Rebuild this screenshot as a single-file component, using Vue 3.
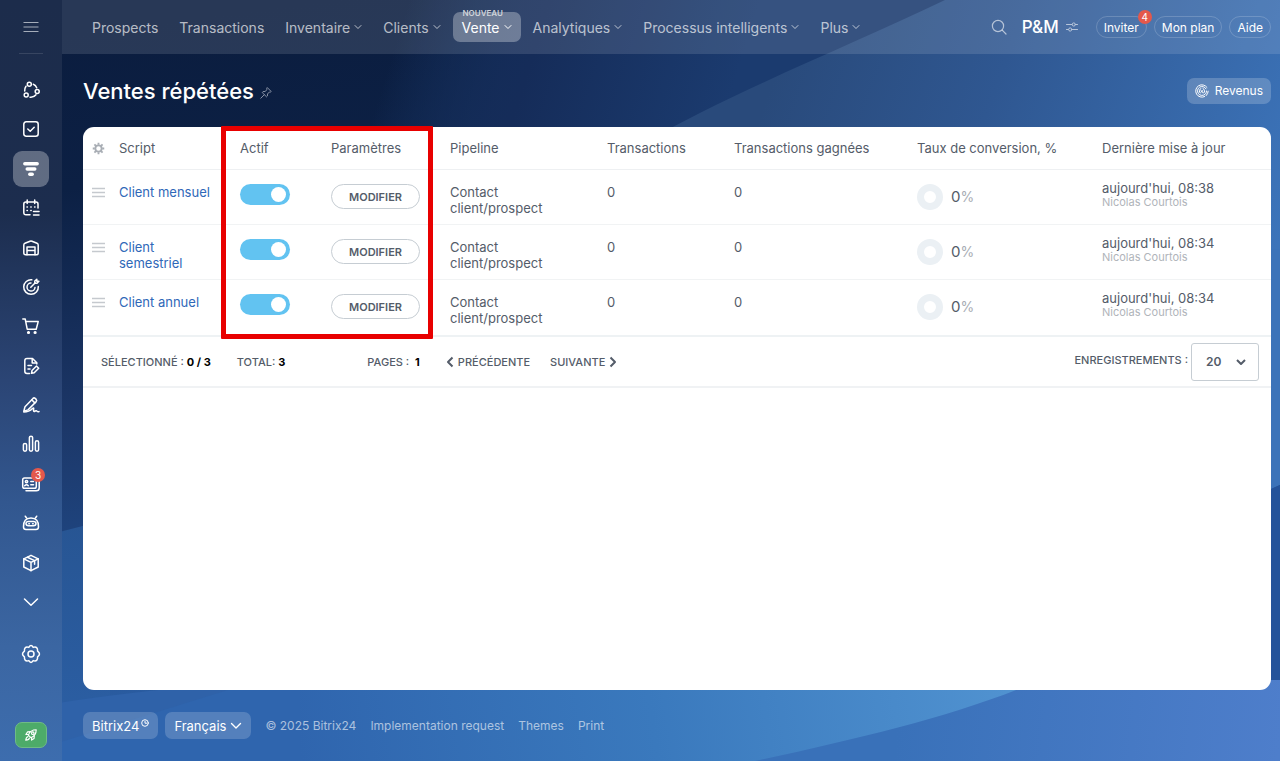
<template>
    <div class="layout">
        <svg class="wallpaper" viewBox="0 0 1280 761" preserveAspectRatio="none" aria-hidden="true">
            <defs>
                <linearGradient id="base" gradientUnits="userSpaceOnUse" x1="330" y1="0" x2="430" y2="761">
                    <stop offset="0" stop-color="#0b1d3f" />
                    <stop offset="0.2" stop-color="#0c2044" />
                    <stop offset="0.5" stop-color="#1c3768" />
                    <stop offset="0.7" stop-color="#1f4885" />
                    <stop offset="0.9" stop-color="#2c60a6" />
                    <stop offset="1" stop-color="#2f65ae" />
                </linearGradient>
                <linearGradient id="middle" gradientUnits="userSpaceOnUse" x1="400" y1="30" x2="720" y2="130">
                    <stop offset="0" stop-color="#1b3b6f" stop-opacity="0" />
                    <stop offset="0.4" stop-color="#152c59" />
                    <stop offset="1" stop-color="#1b3b6f" />
                </linearGradient>
                <linearGradient id="beam" gradientUnits="userSpaceOnUse" x1="780" y1="60" x2="1280" y2="240">
                    <stop offset="0" stop-color="#294a7b" />
                    <stop offset="0.4" stop-color="#2f5791" />
                    <stop offset="1" stop-color="#3c74ba" />
                </linearGradient>
                <linearGradient id="side" gradientUnits="userSpaceOnUse" x1="0" y1="520" x2="0" y2="761">
                    <stop offset="0" stop-color="#275593" />
                    <stop offset="1" stop-color="#2c60a6" />
                </linearGradient>
                <linearGradient id="bottom" gradientUnits="userSpaceOnUse" x1="300" y1="761" x2="1000" y2="650">
                    <stop offset="0" stop-color="#3a79bd" stop-opacity="0" />
                    <stop offset="0.5" stop-color="#3a79bd" />
                    <stop offset="1" stop-color="#5092d0" />
                </linearGradient>
                <linearGradient id="corner" gradientUnits="userSpaceOnUse" x1="900" y1="700" x2="1280" y2="740">
                    <stop offset="0" stop-color="#3971b9" />
                    <stop offset="1" stop-color="#4e7ecb" />
                </linearGradient>
            </defs>
            <rect width="1280" height="761" fill="url(#base)" />
            <rect x="300" width="980" height="200" fill="url(#middle)" />
            <path d="M945 0C850 46 740 88 640 145V250H1280V0Z" fill="url(#beam)" />
            <path d="M1000 249H1280V485L1000 610Z" fill="#3b73b9" />
            <path d="M1000 610L1280 485V761H1000Z" fill="#24539a" />
            <path d="M0 550Q60 530 110 520V761H0Z" fill="url(#side)" />
            <path d="M0 715Q60 698 260 680V761H0Z" fill="#2f62a9" />
            <path d="M260 680H1100V761H0Z" fill="#2f65ae" />
            <path d="M300 680H1100V761H300Z" fill="url(#bottom)" />
            <path d="M755 761C860 738 960 715 1040 680H1280V761Z" fill="url(#corner)" />
        </svg>

        <aside class="sidebar">
            <button class="burger" aria-label="Menu">
                <svg viewBox="0 0 20 20"><path d="M2.5 5.5h15M2.5 10h15M2.5 14.5h15" /></svg>
            </button>
            <nav class="menu">
                <a v-for="item in sideItems" :key="item.name" href="#" class="side-item"
                    :class="item.name === 'crm' ? 'active' : ''" :aria-label="item.name">
                    <svg viewBox="0 0 20 20" :class="item.name">
                        <path v-for="(d, i) in item.paths" :key="i" :d="d" />
                    </svg>
                    <span v-if="item.badge" class="badge">{{ item.badge }}</span>
                </a>
            </nav>
            <a href="#" class="side-item settings" aria-label="settings">
                <svg viewBox="0 0 20 20">
                    <circle cx="10" cy="10" r="3" />
                    <path d="M7.8 3.4Q10 -.2 12.2 3.4Q16.9 2 16.6 7.2Q20.4 10 16.6 12.8Q16.9 18 12.2 16.6Q10 20.2 7.8 16.6Q3.1 18 3.4 12.8Q-.4 10 3.4 7.2Q3.1 2 7.8 3.4Z" />
                </svg>
            </a>
            <button class="rocket" aria-label="Start">
                <svg viewBox="0 0 20 20">
                    <path d="M7 10.2C8.6 6.2 11.5 4.2 15.8 4.2C15.8 8.5 13.8 11.4 9.8 13ZM7.3 9.2L4.3 9.4L6.2 6.6L9.2 6.3M10.8 12.7L10.6 15.7L13.4 13.8L13.7 10.8M6.6 11.8C5.2 12 4.5 13.2 4.2 15.8C6.8 15.5 8 14.8 8.2 13.4" />
                    <circle cx="12" cy="8" r="1.4" />
                </svg>
            </button>
        </aside>

        <div class="page">
            <header class="topbar">
                <nav class="tabs">
                    <a v-for="tab in tabs" :key="tab.label" href="#" class="tab" :class="tab.hint ? 'active' : ''">
                        <span v-if="tab.hint" class="hint">{{ tab.hint }}</span>
                        {{ tab.label }}
                        <svg v-if="tab.more" class="caret" viewBox="0 0 8 8"><path d="M1 2.5L4 5.5L7 2.5" /></svg>
                    </a>
                </nav>
                <div class="tools">
                    <button class="icon-btn" aria-label="Rechercher">
                        <svg viewBox="0 0 16 16"><circle cx="7" cy="7" r="5.6" /><path d="M11.2 11.2L15 15" /></svg>
                    </button>
                    <a href="#" class="company">P&amp;M
                        <svg viewBox="0 0 12 12">
                            <path d="M.5 3.5H6M9.6 3.5H11.5M.5 8.5H2.4M6 8.5H11.5" />
                            <circle cx="7.8" cy="3.5" r="1.6" /><circle cx="4.2" cy="8.5" r="1.6" />
                        </svg>
                    </a>
                    <div class="pills">
                        <button class="pill">Inviter<span class="badge">4</span></button>
                        <button class="pill">Mon plan</button>
                        <button class="pill">Aide</button>
                    </div>
                </div>
            </header>

            <main class="content">
                <div class="heading">
                    <h1>Ventes répétées</h1>
                    <button class="pin" aria-label="Épingler">
                        <svg viewBox="0 0 12 12"><path d="M7.5.8L11.2 4.5L10.2 5.2L9.4 5L7.5 7L7.4 9L6.5 9.8L2.2 5.5L3 4.6L5 4.5L7 2.6L6.8 1.6ZM4.3 7.7L.8 11.2" /></svg>
                    </button>
                    <button class="revenue">
                        <svg viewBox="0 0 14 14">
                            <path d="M12 3.4A6.2 6.2 0 1 0 9.6 12.6M11 4.8A4.5 4.5 0 1 0 10 10.4M13.2 7.2Q13.2 9.5 11.2 11.6M11.5 7Q11.5 8.4 10.8 9.6M5.2 9A2.7 2.7 0 0 1 6 4.4M8 4.5A2.7 2.7 0 0 1 8.4 9.2L6 6.4M6 8.2L8 6.4" />
                        </svg>
                        Revenus
                    </button>
                </div>

                <section class="card">
                    <table class="grid">
                        <colgroup>
                            <col class="c-drag"><col class="c-script"><col class="c-active"><col class="c-params">
                            <col class="c-pipe"><col class="c-deals"><col class="c-won"><col class="c-rate"><col class="c-date">
                        </colgroup>
                        <thead>
                            <tr>
                                <th class="drag">
                                    <button class="gear" aria-label="Configurer">
                                        <svg viewBox="0 0 14 14">
                                            <path d="M7 .8V3M7 11V13.2M.8 7H3M11 7H13.2M2.6 2.6L4.2 4.2M9.8 9.8L11.4 11.4M11.4 2.6L9.8 4.2M4.2 9.8L2.6 11.4" />
                                            <circle cx="7" cy="7" r="3.4" />
                                        </svg>
                                    </button>
                                </th>
                                <th v-for="name in columns" :key="name">{{ name }}</th>
                            </tr>
                        </thead>
                        <tbody>
                            <tr v-for="row in rows" :key="row.name">
                                <td class="drag">
                                    <svg class="handle" viewBox="0 0 13 11"><path d="M0 1.5h13M0 5.5h13M0 9.5h13" /></svg>
                                </td>
                                <td class="script"><a href="#">{{ row.name }}</a></td>
                                <td><input v-model="row.active" type="checkbox" class="toggle" :aria-label="'Actif ' + row.name"></td>
                                <td><button class="edit">Modifier</button></td>
                                <td>Contact client/prospect</td>
                                <td>{{ row.deals }}</td>
                                <td>{{ row.won }}</td>
                                <td>
                                    <div class="rate">
                                        <span class="donut"></span>
                                        <span>{{ row.rate }}<small>%</small></span>
                                    </div>
                                </td>
                                <td class="date">{{ row.date }}<span class="author">Nicolas Courtois</span></td>
                            </tr>
                        </tbody>
                    </table>
                    <div class="mark"></div>

                    <div class="pager">
                        <span class="selected">Sélectionné : <b>0 / 3</b></span>
                        <span class="total">Total: <b>3</b></span>
                        <span class="pages">Pages : <b>1</b></span>
                        <a href="#" class="prev">
                            <svg viewBox="0 0 8 12"><path d="M6.5 1.5L2 6L6.5 10.5" /></svg>Précédente
                        </a>
                        <a href="#" class="next">
                            Suivante<svg viewBox="0 0 8 12"><path d="M1.5 1.5L6 6L1.5 10.5" /></svg>
                        </a>
                        <label for="page-size">Enregistrements :</label>
                        <div class="select">
                            <select id="page-size" v-model="pageSize">
                                <option>5</option>
                                <option>10</option>
                                <option>20</option>
                                <option>50</option>
                            </select>
                            <svg viewBox="0 0 12 8"><path d="M2 2L6 6L10 2" /></svg>
                        </div>
                    </div>
                </section>
            </main>

            <footer class="footer">
                <button class="chip brand">Bitrix24
                    <svg viewBox="0 0 8 8"><circle cx="4" cy="4" r="3.3" /><path d="M4 2.2V4.2H5.6" /></svg>
                </button>
                <button class="chip">Français
                    <svg class="down" viewBox="0 0 12 8"><path d="M1.5 1.5L6 6L10.5 1.5" /></svg>
                </button>
                <span class="copy">© 2025 Bitrix24</span>
                <a href="#">Implementation request</a>
                <a href="#">Themes</a>
                <a href="#">Print</a>
            </footer>
        </div>
    </div>
</template>
<script setup>
import { ref } from 'vue'

const pageSize = ref('20')

const sideItems = [
    { name: 'collab', paths: ['M10.3 4.2a2 2 0 1 1-4 0a2 2 0 1 1 4 0Z', 'M18.2 11.6a2 2 0 1 1-4 0a2 2 0 1 1 4 0Z', 'M7.2 14.9a2 2 0 1 1-4 0a2 2 0 1 1 4 0Z', 'M3.7 11Q3.5 8.2 5 6.2', 'M12.3 4.3Q14.8 5.2 15.7 7.7', 'M9 17.2Q12.8 17.6 15 14.8'] },
    { name: 'tasks', paths: ['M5.3 2.8H14.7Q17.2 2.8 17.2 5.3V14.7Q17.2 17.2 14.7 17.2H5.3Q2.8 17.2 2.8 14.7V5.3Q2.8 2.8 5.3 2.8Z', 'M6.8 10L9.2 12.2L13.2 8.2'] },
    { name: 'crm', paths: ['M3.8 4.7H16.2', 'M6.2 10H13.8', 'M8.8 15.3H11.2'] },
    { name: 'calendar', paths: ['M9 16.8H5Q2.8 16.8 2.8 14.5V6Q2.8 4 5 4H15Q17 4 17 6V10', 'M6.2 2V5.5M13.7 2V5.5', 'M6 9h.4M9.8 9h.4M13.6 9h.4M6 12.5h.4M9.8 12.5h.4', 'M12.5 13.6H18M12.5 17H18'] },
    { name: 'inventory', paths: ['M2.8 7Q2.8 5.8 4 5.2L9 3.2Q10 2.8 11 3.2L16 5.2Q17.2 5.8 17.2 7V15Q17.2 16.8 15.5 16.8H4.5Q2.8 16.8 2.8 15Z', 'M6 16.8V9H14V16.8M6 12.6H14'] },
    { name: 'marketing', paths: ['M10.8 2.8A7.3 7.3 0 1 0 17.3 9.5', 'M10 6.1A4 4 0 1 0 14 10.5', 'M9.8 10.2L14 6', 'M13.8 6.2V4L15.8 2.2V4.2H17.9L16 6.2Z'] },
    { name: 'shop', paths: ['M1.8 3H4.2L6.2 13.2H15.2L17.2 5.6H4.8', 'M7.4 16.6h.2M14 16.6h.2'] },
    { name: 'docs', paths: ['M8.5 17.5H6Q3.8 17.5 3.8 15.3V4.7Q3.8 2.5 6 2.5H11.5L15.8 6.8V8', 'M11.2 2.8V7H15.4', 'M7 9.5H10.5M7 13H9', 'M10.5 17.3L11 14.5L15.5 10L17.7 12.2L13.2 16.7Z'] },
    { name: 'sign', paths: ['M2.8 16.2L4 11.8L12 3.4Q13 2.4 14.2 3.4L15.2 4.4Q16.2 5.5 15.2 6.6L7 14.9Z', 'M10.7 4.8L13.8 7.9', 'M2.8 17Q8 17 11.5 13.5Q13.2 12.3 12.6 14.5Q12 17.4 14.2 16Q15.5 15.3 16 16.2Q16.7 17 18 16.6'] },
    { name: 'reports', paths: ['M2.4 10.8q0-1.4 1.6-1.4t1.6 1.4v5q0 1.4-1.6 1.4t-1.6-1.4Z', 'M8.4 3.6q0-1.4 1.6-1.4t1.6 1.4v12.2q0 1.4-1.6 1.4t-1.6-1.4Z', 'M14.4 8.2q0-1.4 1.6-1.4t1.6 1.4v7.6q0 1.4-1.6 1.4t-1.6-1.4Z'] },
    { name: 'contacts', badge: 3, paths: ['M3.5 4H13.5Q15.3 4 15.3 5.8V12.4Q15.3 14.2 13.5 14.2H3.5Q1.7 14.2 1.7 12.4V5.8Q1.7 4 3.5 4Z', 'M5 16.8H15.2Q18.2 16.8 18.2 14V6.5', 'M6.7 7.6a1.2 1.2 0 1 1-2.4 0a1.2 1.2 0 1 1 2.4 0Z', 'M3.7 11.7Q5.5 9.6 7.3 11.7', 'M9.8 7.6H12.5M9.8 10.8H12.5'] },
    { name: 'robot', paths: ['M5.6 5L4.3 3.2M14.4 5L15.7 3.2', 'M2.5 14Q2.2 5 10 5T17.5 14Q17.4 16.5 15 16.5H5Q2.6 16.5 2.5 14Z', 'M7.6 8.5H12.4Q15 8.5 15 10.6T12.4 12.8H7.6Q5 12.8 5 10.6T7.6 8.5Z', 'M7.8 10.7h.6M11.6 10.7h.6'] },
    { name: 'market', paths: ['M10 2.3L17.2 5.8V14L10 17.7L2.8 14V5.8Z', 'M2.8 5.8L10 9.3L17.2 5.8M10 9.3V17.7', 'M6.4 4.2L13.6 7.6V11.2'] },
    { name: 'more', paths: ['M3.5 7L10 13.2L16.5 7'] },
]

const tabs = [
    { label: 'Prospects' },
    { label: 'Transactions' },
    { label: 'Inventaire', more: true },
    { label: 'Clients', more: true },
    { label: 'Vente', more: true, hint: 'Nouveau' },
    { label: 'Analytiques', more: true },
    { label: 'Processus intelligents', more: true },
    { label: 'Plus', more: true },
]

const columns = ['Script', 'Actif', 'Paramètres', 'Pipeline', 'Transactions', 'Transactions gagnées', 'Taux de conversion, %', 'Dernière mise à jour']

const rows = ref([
    { name: 'Client mensuel', active: true, deals: 0, won: 0, rate: 0, date: "aujourd'hui, 08:38" },
    { name: 'Client semestriel', active: true, deals: 0, won: 0, rate: 0, date: "aujourd'hui, 08:34" },
    { name: 'Client annuel', active: true, deals: 0, won: 0, rate: 0, date: "aujourd'hui, 08:34" },
])
</script>
<style>
body {
    margin: 0;
    background: #21498a;
}
</style>
<style scoped>
* {
    box-sizing: border-box;
}

.layout {
    position: relative;
    display: flex;
    min-height: 100vh;
    font-family: Inter, "Liberation Sans", sans-serif;
    font-size: 13px;
    color: #545c69;
}

svg {
    fill: none;
    stroke: currentColor;
    stroke-linecap: round;
    stroke-linejoin: round;
    flex: none;
}

.wallpaper {
    position: absolute;
    inset: 0;
    width: 100%;
    height: 100%;
    stroke: none;
}

a {
    color: inherit;
    text-decoration: none;
}

button {
    padding: 0;
    border: 0;
    background: none;
    color: inherit;
    font: inherit;
    cursor: pointer;
}

.sidebar {
    position: relative;
    width: 62px;
    flex: none;
    display: flex;
    flex-direction: column;
    align-items: center;
    color: #fff;
    background: linear-gradient(#1c2c4b, #1c2d4e 28%, #2b4575 50%, #32578f 66%, #3b66a2 85%, #3d6dae);
}

.burger {
    width: 24px;
    height: 54px;
    border-bottom: 1px solid rgba(255, 255, 255, 0.12);
    color: #a5adba;
}

.burger svg {
    display: block;
    width: 20px;
    height: 20px;
    margin: 0 auto;
    stroke-linecap: butt;
}

.menu {
    flex: 1;
    display: flex;
    flex-direction: column;
    justify-content: space-between;
    margin-top: 18px;
}

.side-item {
    position: relative;
    display: flex;
    align-items: center;
    justify-content: center;
    width: 36px;
    height: 36px;
    border-radius: 9px;
}

.side-item.active {
    background: rgba(255, 255, 255, 0.3);
}

.side-item svg {
    width: 20px;
    height: 20px;
    stroke-width: 1.5;
}

.side-item .crm {
    stroke-width: 3.4;
}

.side-item .shop path:last-child {
    stroke-width: 3;
}

.badge {
    position: absolute;
    display: flex;
    align-items: center;
    justify-content: center;
    width: 14px;
    height: 14px;
    border-radius: 50%;
    background: #e4584b;
    color: #fff;
    font-size: 10px;
    line-height: 14px;
}

.side-item .badge {
    top: 2px;
    right: 4px;
}

.settings {
    margin-top: 16px;
}

.rocket {
    width: 32px;
    height: 26px;
    margin: 50px 0 13px;
    border-radius: 7px;
    border: 1px solid #6fbb86;
    background: #4dab69;
}

.rocket svg {
    display: block;
    width: 18px;
    height: 18px;
    margin: auto;
    stroke-width: 1.3;
}

.page {
    position: relative;
    flex: 1;
    min-width: 0;
    display: flex;
    flex-direction: column;
}

.topbar {
    display: flex;
    align-items: center;
    justify-content: space-between;
    height: 54px;
    padding: 0 9px 0 21px;
    background: rgba(255, 255, 255, 0.12);
    color: #fff;
}

.tabs {
    display: flex;
    gap: 3px;
}

.tab {
    position: relative;
    display: flex;
    align-items: center;
    gap: 4px;
    height: 30px;
    padding: 0 9px;
    border-radius: 7px;
    font-size: 14px;
    white-space: nowrap;
    color: rgba(255, 255, 255, 0.68);
}

.tab.active {
    background: rgba(255, 255, 255, 0.3);
    color: #fff;
}

.hint {
    position: absolute;
    top: -4px;
    left: 10px;
    font-size: 8px;
    line-height: 10px;
    text-transform: uppercase;
    font-weight: 600;
    color: #d0d4da;
}

.caret {
    width: 8px;
    height: 8px;
}

.tools {
    display: flex;
    align-items: center;
}

.icon-btn {
    display: flex;
    margin-right: 15px;
    color: rgba(255, 255, 255, 0.6);
}

.icon-btn svg {
    width: 16px;
    height: 16px;
    stroke-width: 1.2;
}

.company {
    display: flex;
    align-items: center;
    gap: 7px;
    font-size: 17px;
    font-weight: 500;
}

.company svg {
    width: 12px;
    height: 12px;
    opacity: 0.6;
}

.pills {
    display: flex;
    gap: 7px;
    margin-left: 18px;
}

.pill {
    position: relative;
    height: 22px;
    padding: 0 7px;
    border: 1px solid rgba(255, 255, 255, 0.18);
    border-radius: 11px;
    font-size: 12px;
    white-space: nowrap;
}

.pill .badge {
    top: -7px;
    right: -6px;
}

.content {
    flex: 1;
    display: flex;
    flex-direction: column;
    padding: 0 9px 0 21px;
}

.heading {
    display: flex;
    align-items: center;
    height: 73px;
    color: #fff;
}

h1 {
    margin: 0;
    font-size: 22px;
    font-weight: 500;
    line-height: 28px;
}

.pin {
    display: flex;
    margin: 4px 0 0 6px;
    color: #8791a4;
}

.pin svg {
    width: 12px;
    height: 12px;
}

.revenue {
    display: flex;
    align-items: center;
    gap: 6px;
    height: 26px;
    margin-left: auto;
    padding: 0 8px;
    border-radius: 7px;
    background: rgba(255, 255, 255, 0.2);
    font-size: 12px;
}

.revenue svg {
    width: 14px;
    height: 14px;
}

.card {
    position: relative;
    flex: 1;
    border-radius: 11px;
    background: #fff;
}

.grid {
    width: 100%;
    table-layout: fixed;
    border-collapse: separate;
    border-spacing: 0;
}

.c-drag { width: 36px; }
.c-script { width: 121px; }
.c-active { width: 91px; }
.c-params { width: 119px; }
.c-pipe { width: 157px; }
.c-deals { width: 127px; }
.c-won { width: 183px; }
.c-rate { width: 185px; }
.c-date { width: 169px; }

th {
    height: 43px;
    padding: 0;
    border-bottom: 1px solid #eef0f2;
    text-align: left;
    font-weight: 400;
    white-space: nowrap;
}

td {
    height: 55px;
    padding: 14px 22px 0 0;
    border-bottom: 1px solid #f1f3f4;
    vertical-align: top;
    line-height: 16px;
}

td.drag,
th.drag {
    padding-left: 9px;
    padding-right: 0;
}

tbody tr:last-child td {
    height: 57px;
    border-bottom: 2px solid #eef2f4;
}

.gear {
    display: flex;
    color: #a8adb4;
}

.gear svg {
    width: 13px;
    height: 13px;
    stroke-width: 2;
    stroke-linecap: butt;
}

.handle {
    display: block;
    width: 13px;
    height: 11px;
    margin-top: 3px;
    color: #c5c9ce;
    stroke-width: 1.6;
}

.script a {
    color: #2f68b8;
}

.toggle {
    appearance: none;
    display: flex;
    align-items: center;
    justify-content: flex-end;
    width: 50px;
    height: 21px;
    margin: 0;
    padding: 0 4px;
    border-radius: 11px;
    background: #62c3f1;
    cursor: pointer;
}

.toggle::before {
    content: '';
    width: 15px;
    height: 15px;
    border-radius: 50%;
    background: #fff;
}

.toggle:not(:checked) {
    justify-content: flex-start;
    background: #c6cdd3;
}

.edit {
    display: block;
    width: 89px;
    height: 25px;
    border: 1px solid #c6cdd3;
    border-radius: 13px;
    font-size: 11px;
    font-weight: 600;
    text-transform: uppercase;
}

td:has(.toggle),
td:has(.edit),
td:has(.rate) {
    padding-right: 0;
}

.rate {
    display: flex;
    align-items: center;
    gap: 8px;
    font-size: 15px;
}

.rate small {
    font-size: 14px;
    color: #a8adb4;
}

.donut {
    width: 26px;
    height: 26px;
    border: 7px solid #ebf0f4;
    border-radius: 50%;
}

td.date {
    padding-top: 10px;
    padding-right: 0;
}

.author {
    display: block;
    font-size: 11px;
    line-height: 13px;
    color: #b0b4ba;
}

.mark {
    position: absolute;
    top: -1px;
    left: 138px;
    width: 212px;
    height: 213px;
    border: 5px solid #e80000;
    border-radius: 1px;
    pointer-events: none;
}

.pager {
    display: flex;
    align-items: center;
    height: 51px;
    padding: 0 12px 0 18px;
    border-bottom: 2px solid #f0f2f4;
    font-size: 11px;
    font-weight: 500;
    text-transform: uppercase;
    white-space: nowrap;
}

.pager b {
    font-weight: 700;
    color: #000;
}

.total {
    margin-left: 26px;
}

.pages {
    margin-left: 82px;
}

.pages b {
    margin-left: 3px;
}

.prev,
.next {
    display: flex;
    align-items: center;
    gap: 4px;
}

.prev {
    margin-left: 26px;
}

.next {
    margin-left: 20px;
}

.prev svg,
.next svg {
    width: 8px;
    height: 12px;
    stroke-width: 2;
    stroke-linecap: butt;
}

.pager label {
    margin-left: auto;
    padding-bottom: 3px;
}

.select {
    display: grid;
    align-items: center;
    margin-left: 3px;
}

.select select {
    grid-area: 1 / 1;
    appearance: none;
    width: 68px;
    height: 38px;
    padding: 0 14px;
    border: 1px solid #c6cdd3;
    border-radius: 3px;
    background: #fff;
    color: inherit;
    font: inherit;
    font-size: 12px;
    font-weight: 600;
}

.select svg {
    grid-area: 1 / 1;
    justify-self: end;
    width: 12px;
    height: 8px;
    margin-right: 12px;
    stroke-width: 2;
    stroke-linecap: butt;
    pointer-events: none;
}

.footer {
    display: flex;
    align-items: center;
    height: 71px;
    gap: 14px;
    padding: 0 21px;
    font-size: 12px;
    color: rgba(255, 255, 255, 0.6);
    white-space: nowrap;
}

.chip {
    display: flex;
    align-items: center;
    gap: 4px;
    height: 27px;
    padding: 0 9px;
    border-radius: 7px;
    background: rgba(255, 255, 255, 0.18);
    color: #fff;
    font-size: 13px;
}

.brand {
    gap: 2px;
    margin-right: -7px;
}

.brand svg {
    width: 8px;
    height: 8px;
    margin-bottom: 5px;
}

.down {
    width: 12px;
    height: 8px;
    stroke-width: 1.4;
}
</style>
